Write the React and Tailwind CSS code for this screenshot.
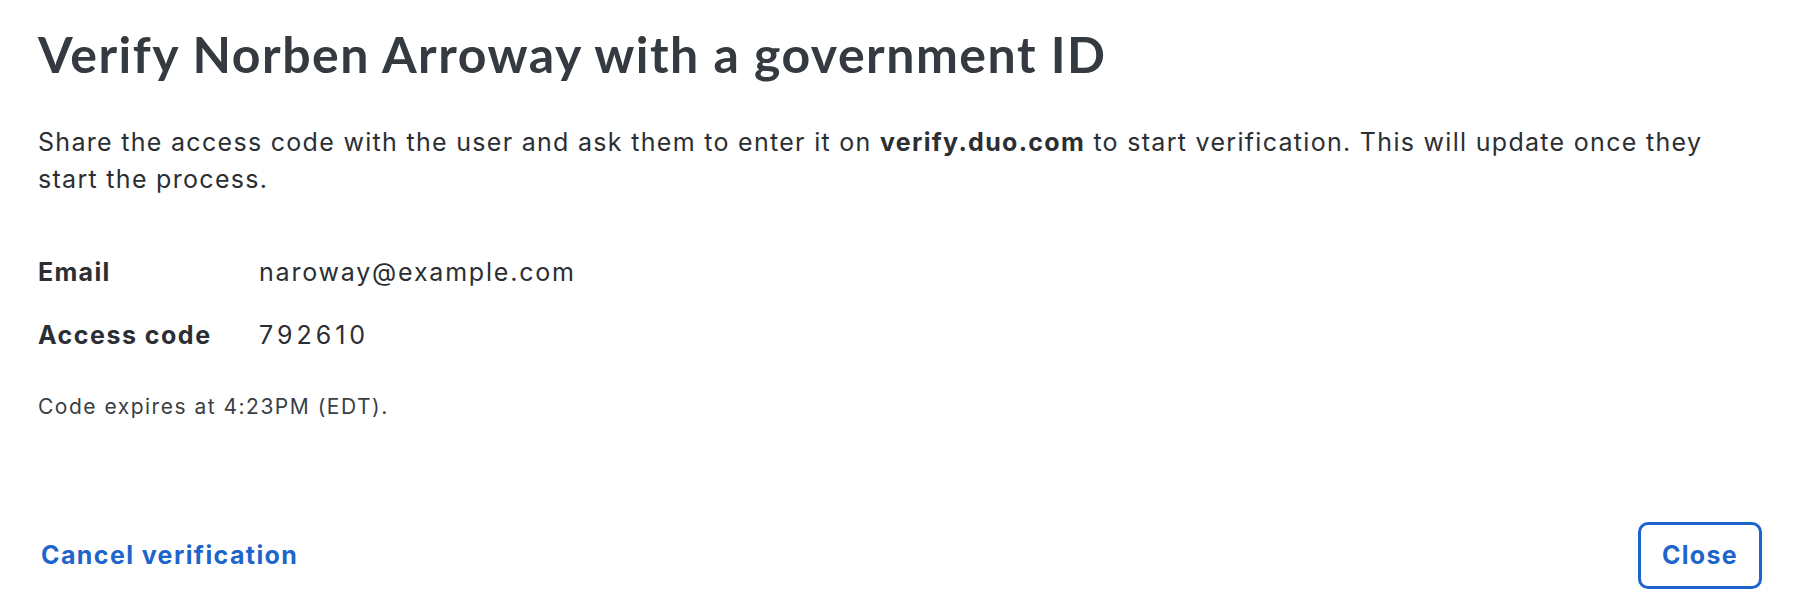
import React from "react";

export default function App() {
  return (
    <div className="w-[1800px] h-[610px] bg-white flex flex-col px-[38px] pt-[22px] pb-[21px] font-['Inter',sans-serif] text-[#2b2f33]">
      <h1 className="font-['Lato',sans-serif] font-bold text-[50px] leading-[64px] text-[#353a40] tracking-[1.5px]">
        Verify Norben Arroway with a government ID
      </h1>
      <p className="mt-[38px] text-[25px] leading-[37px] tracking-[1.3px]">
        Share the access code with the user and ask them to enter it on{" "}
        <span className="font-bold">verify.duo.com</span> to start verification. This will update once they start
        the process.
      </p>
      <div className="mt-[56px] grid grid-cols-[221px_1fr] gap-y-[27px] text-[25px] leading-[36px] tracking-[1.3px]">
        <div className="font-bold">Email</div>
        <div className="tracking-[1.8px]">naroway@example.com</div>
        <div className="font-bold tracking-[1.5px]">Access code</div>
        <div className="tracking-[4px]">792610</div>
      </div>
      <p className="mt-[40px] text-[21px] leading-[28px] tracking-[1.5px] text-[#3a3f45]">
        Code expires at 4:23PM (EDT).
      </p>
      <div className="mt-auto flex items-center justify-between">
        <button className="text-[25px] font-bold tracking-[1.4px] text-[#1d65cc] px-[3px]">Cancel verification</button>
        <button className="w-[124px] h-[67px] border-[3px] border-[#1d65cc] rounded-[10px] text-[25px] font-bold tracking-[1.3px] text-[#1d65cc]">
          Close
        </button>
      </div>
    </div>
  );
}
